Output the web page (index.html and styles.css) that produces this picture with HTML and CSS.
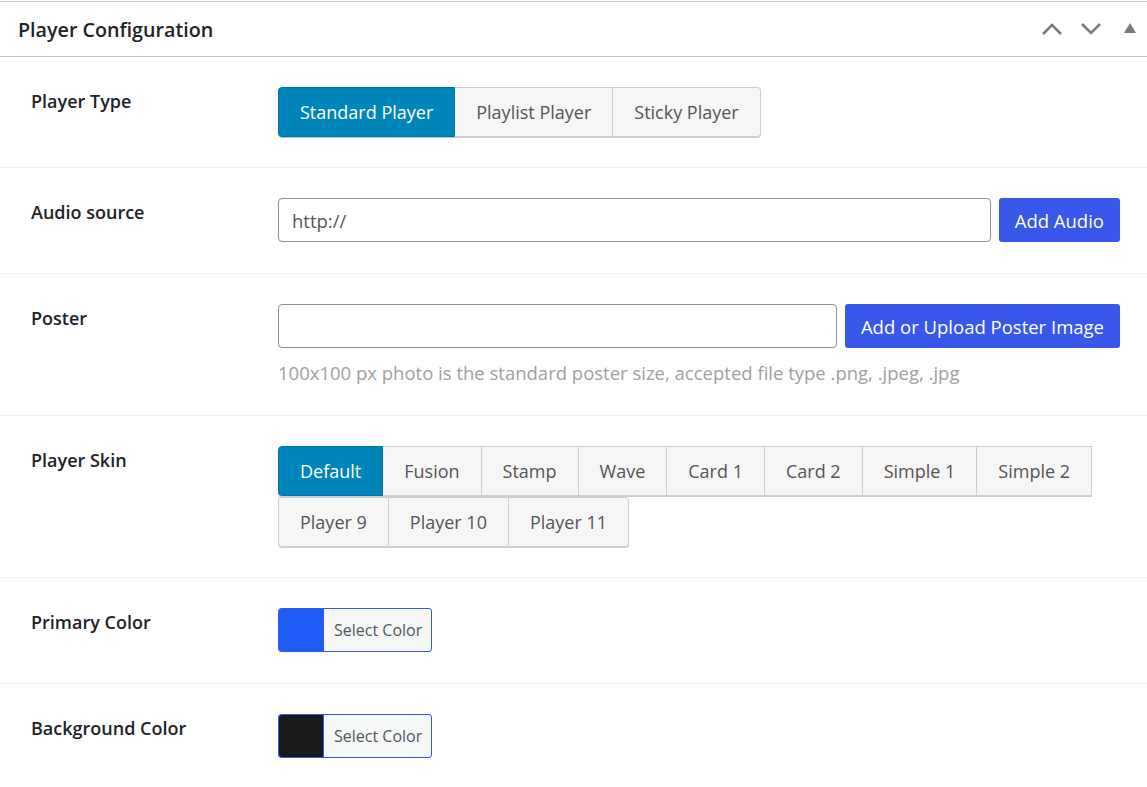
FILE: index.html
```html
<!DOCTYPE html>
<html lang="en">
<head>
<meta charset="utf-8">
<title>Player Configuration</title>
<link rel="stylesheet" href="styles.css">
</head>
<body>
<div class="panel">
  <div class="panel-head">
    <h2 class="panel-title">Player Configuration</h2>
    <div class="head-actions">
      <svg class="chev" width="22" height="14" viewBox="0 0 22 14"><path d="M2 12 L11 3 L20 12" fill="none" stroke="#787c82" stroke-width="2.6"/></svg>
      <svg class="chev" width="22" height="14" viewBox="0 0 22 14"><path d="M2 2 L11 11 L20 2" fill="none" stroke="#787c82" stroke-width="2.6"/></svg>
      <svg class="tri" width="12" height="10" viewBox="0 0 12 10"><path d="M6 0 L12 10 L0 10 Z" fill="#787c82"/></svg>
    </div>
  </div>

  <div class="row">
    <div class="label">Player Type</div>
    <div class="control">
      <div class="btn-group">
        <button class="seg active">Standard Player</button>
        <button class="seg">Playlist Player</button>
        <button class="seg">Sticky Player</button>
      </div>
    </div>
  </div>

  <div class="row">
    <div class="label">Audio source</div>
    <div class="control">
      <div class="input-line">
        <input class="text-input" type="text" value="http://">
        <button class="primary-btn">Add Audio</button>
      </div>
    </div>
  </div>

  <div class="row">
    <div class="label">Poster</div>
    <div class="control">
      <div class="input-line">
        <input class="text-input" type="text" value="">
        <button class="primary-btn">Add or Upload Poster Image</button>
      </div>
      <p class="hint">100x100 px photo is the standard poster size, accepted file type .png, .jpeg, .jpg</p>
    </div>
  </div>

  <div class="row">
    <div class="label">Player Skin</div>
    <div class="control">
      <div class="btn-group wrap">
        <button class="seg active">Default</button>
        <button class="seg">Fusion</button>
        <button class="seg">Stamp</button>
        <button class="seg">Wave</button>
        <button class="seg">Card 1</button>
        <button class="seg">Card 2</button>
        <button class="seg">Simple 1</button>
        <button class="seg">Simple 2</button>
        <button class="seg">Player 9</button>
        <button class="seg">Player 10</button>
        <button class="seg">Player 11</button>
      </div>
    </div>
  </div>

  <div class="row">
    <div class="label">Primary Color</div>
    <div class="control">
      <button class="color-btn"><span class="swatch swatch-blue"></span><span class="color-text">Select Color</span></button>
    </div>
  </div>

  <div class="row last">
    <div class="label">Background Color</div>
    <div class="control">
      <button class="color-btn"><span class="swatch swatch-dark"></span><span class="color-text">Select Color</span></button>
    </div>
  </div>
</div>
</body>
</html>
```

FILE: styles.css
```css
* { box-sizing: border-box; }
body {
  margin: 0;
  background: #fff;
  font-family: "Open Sans", "Noto Sans", sans-serif;
  color: #1d2327;
}
.panel {
  margin-top: 1px;
  border-top: 1px solid #c3c4c7;
}
.panel-head {
  height: 55px;
  border-bottom: 1px solid #c3c4c7;
  display: flex;
  align-items: center;
  justify-content: space-between;
  padding: 0 10px 0 18px;
}
.panel-title {
  margin: 0;
  font-size: 19.7px;
  font-weight: 600;
  color: #1d2327;
}
.head-actions {
  display: flex;
  align-items: center;
  gap: 17px;
  margin-right: 1px;
}
.chev { display: block; }
.tri { display: block; margin-left: 5px; margin-top: -2px; }

.row {
  display: grid;
  grid-template-columns: 247px 1fr;
  padding: 30px 27px 30px 31px;
  border-bottom: 1px solid #f0f0f1;
}
.row.last { border-bottom: none; }
.label {
  font-size: 18px;
  font-weight: 600;
  line-height: 28px;
  min-height: 45px;
  color: #1d2327;
}
.btn-group {
  display: flex;
}
.btn-group.wrap { flex-wrap: wrap; row-gap: 1px; }
.seg {
  font-family: inherit;
  font-size: 18px;
  height: 50px;
  padding: 0 21px;
  border: 1px solid #cfcfcf;
  border-left: none;
  background: #f6f6f6;
  color: #555;
  box-shadow: 0 1px 0 #ccc;
  cursor: pointer;
}
.seg:first-child {
  border-left: 1px solid #cfcfcf;
  border-radius: 4px 0 0 4px;
}
.seg:last-child { border-radius: 0 4px 4px 0; }
.wrap .seg:nth-child(9) { border-left: 1px solid #cfcfcf; border-radius: 0 0 0 4px; }
.wrap .seg:nth-child(8) { border-radius: 0; }
.wrap .seg:first-child { border-radius: 4px 0 0 4px; }
.seg.active {
  background: #0085ba;
  border-color: #0073aa;
  color: #fff;
}
.input-line {
  display: flex;
  gap: 8px;
}
.text-input {
  flex: 1;
  height: 44px;
  border: 1px solid #8c8f94;
  border-radius: 4px;
  padding: 0 13px;
  font-family: inherit;
  font-size: 18.5px;
  color: #50575e;
  background: #fff;
}
.primary-btn {
  height: 44px;
  padding: 0 16px;
  background: #3858e9;
  color: #fff;
  border: none;
  border-radius: 3px;
  font-family: inherit;
  font-size: 18.5px;
  cursor: pointer;
}
.hint {
  margin: 12px 0 0;
  font-size: 18.5px;
  line-height: 25px;
  color: #a0a0a0;
}
.color-btn {
  display: flex;
  height: 44px;
  padding: 0;
  border: 1px solid #3858e9;
  border-radius: 3px;
  overflow: hidden;
  background: #f6f7f7;
  cursor: pointer;
  font-family: inherit;
}
.swatch {
  width: 45px;
  height: 100%;
  border-right: 1px solid #3858e9;
}
.swatch-blue { background: #1f5cf5; }
.swatch-dark { background: #1a1a1a; }
.color-text {
  display: flex;
  align-items: center;
  padding: 0 9px 0 10px;
  font-size: 16px;
  color: #50575e;
}
```
